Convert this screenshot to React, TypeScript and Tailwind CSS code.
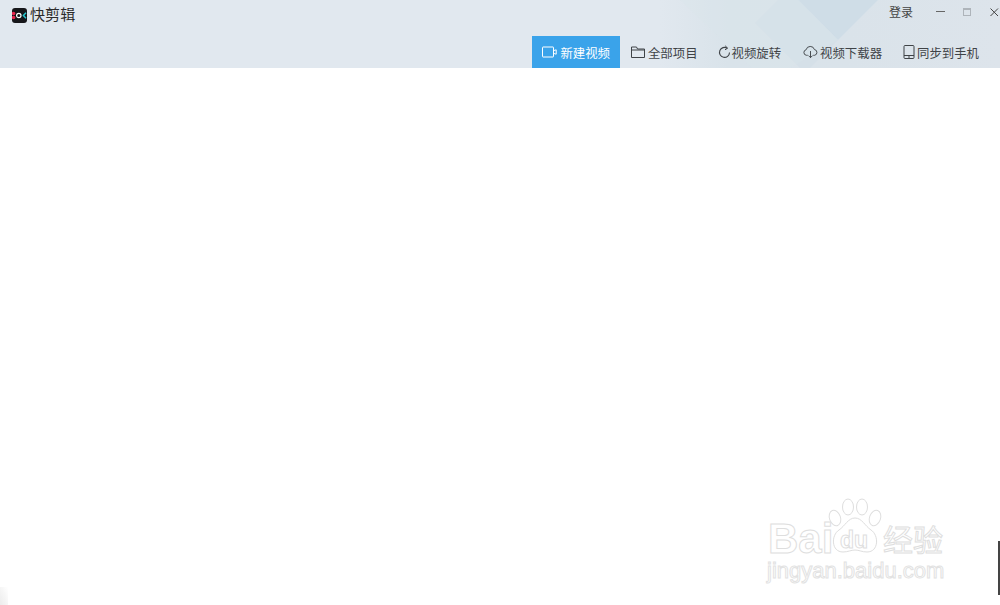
import React from "react";

const cjk = "font-['Noto_Sans_CJK_SC','Liberation_Sans',sans-serif]";

function VideoIcon() {
  return (
    <svg width="15" height="12" viewBox="0 0 15 12" fill="none" stroke="currentColor" strokeWidth="1">
      <rect x="0.5" y="1" width="11" height="10" rx="0.5" />
      <path d="M12 4.5 14.2 3.8V8.2L12 7.5" />
    </svg>
  );
}
function FolderIcon() {
  return (
    <svg className="ml-[1px]" width="14" height="12" viewBox="0 0 14 12" fill="none" stroke="currentColor" strokeWidth="1">
      <path d="M0.5 11.5V1H5.5L6.5 3H13.5V11.5Z" />
      <path d="M0.5 4H13.5" />
    </svg>
  );
}
function RotateIcon() {
  return (
    <svg width="13" height="14" viewBox="0 0 13 14" fill="none" stroke="currentColor" strokeWidth="1.1">
      <path d="M9.2 3.2A5 5 0 1 0 11.5 7.5" />
      <path d="M7.2 0.8 9.6 3.2 7 4.8" strokeWidth="1" />
    </svg>
  );
}
function CloudIcon() {
  return (
    <svg className="ml-[2px]" width="15" height="14" viewBox="0 0 16 14" fill="none" stroke="currentColor" strokeWidth="1">
      <path d="M5 10.5H3.6A3 3 0 0 1 3.3 4.6 4.6 4.6 0 0 1 12.2 4.4 3.1 3.1 0 0 1 12.4 10.5H11" />
      <path d="M8 6V13M5.8 10.8 8 13 10.2 10.8" />
    </svg>
  );
}
function PhoneIcon() {
  return (
    <svg className="ml-[1px]" width="12" height="14" viewBox="0 0 12 14" fill="none" stroke="currentColor" strokeWidth="1">
      <rect x="1" y="0.5" width="10" height="13" rx="1" />
      <path d="M1 10.5H11M5 12H7" />
    </svg>
  );
}

type NavItem = { label: string; icon: React.ReactNode; slot: string; active?: boolean };

const nav: NavItem[] = [
  { label: "新建视频", icon: <VideoIcon />, slot: "w-[18px]", active: true },
  { label: "全部项目", icon: <FolderIcon />, slot: "w-[18px]" },
  { label: "视频旋转", icon: <RotateIcon />, slot: "w-[14px]" },
  { label: "视频下载器", icon: <CloudIcon />, slot: "w-[19px]" },
  { label: "同步到手机", icon: <PhoneIcon />, slot: "w-[15px]" },
];

function Logo() {
  return (
    <svg width="15" height="15" viewBox="0 0 15 15">
      <rect width="15" height="15" rx="3" fill="#17171b" />
      <circle cx="1.6" cy="5.5" r="1.8" fill="#e8264f" />
      <circle cx="1.6" cy="9.5" r="1.8" fill="#e8264f" />
      <circle cx="6.8" cy="7.5" r="2.2" fill="none" stroke="#fff" strokeWidth="1.2" />
      <path d="M14 4.8 11.4 7.5 14 10.2" fill="none" stroke="#25c6d0" strokeWidth="1.5" />
    </svg>
  );
}

export default function App() {
  return (
    <div className={`relative h-[605px] w-[1000px] overflow-hidden bg-white ${cjk}`}>
      <header className="relative h-[68px] overflow-hidden bg-[#e1e8ef]">
        <svg className="absolute left-[660px] top-0" width="340" height="68" viewBox="0 0 340 68">
          <defs>
            <linearGradient id="wash" x1="0" x2="1" y1="0" y2="0">
              <stop offset="0" stopColor="#e1e8ef" />
              <stop offset="0.2" stopColor="#d9e3ea" />
              <stop offset="0.55" stopColor="#dae3ea" />
              <stop offset="1" stopColor="#dde4eb" />
            </linearGradient>
          </defs>
          <rect width="340" height="68" fill="url(#wash)" />
          <path d="M95 23 118 0H139L178 40 150 68H140Z" fill="#d5e0e8" />
          <path d="M138 0H218L178 40Z" fill="#cfdde7" />
          <path d="M20 0 92 68H130L178 40 139 0Z" fill="#dbe5eb" opacity="0.35" />
        </svg>

        <div className="relative flex h-[36px] items-start justify-between">
          <div className="flex items-center gap-[3px] pl-[12px] pt-[7px]">
            <Logo />
            <span className="text-[15px] leading-[16px] tracking-[0.1px] text-[#2b2b2b] -translate-y-[1px]">快剪辑</span>
          </div>
          <div className="flex items-center pt-[3px] text-[#555]">
            <span className="mr-[23px] text-[12px] leading-[17px] text-[#444]">登录</span>
            <span className="mr-[18px] h-[1px] w-[9px] bg-[#666]" />
            <span className="mr-[18px] h-[8px] w-[8px] border border-[#aeb4ba] border-t-2" />
            <svg className="mr-[1px]" width="10" height="10" viewBox="0 0 10 10" stroke="#444" strokeWidth="1">
              <path d="M1.5 1.5 9 9M9 1.5 1.5 9" />
            </svg>
          </div>
        </div>

        <nav className="relative flex h-[32px] justify-end pr-[11px]">
          {nav.map((item) => (
            <div
              key={item.label}
              className={`flex h-full items-center px-[10px] text-[12.4px] ${
                item.active ? "bg-[#3aa3ea] text-white" : "text-[#3f4347]"
              }`}
            >
              <span className={`flex items-center ${item.slot}`}>{item.icon}</span>
              <span className="translate-y-[1px]">{item.label}</span>
            </div>
          ))}
        </nav>
      </header>

      <div className="absolute left-[767px] top-[498px] h-[90px] w-[185px] select-none font-['Liberation_Sans',sans-serif] text-transparent">
        <span className="absolute left-[1px] top-[19px] text-[42px] leading-[44px] font-bold [-webkit-text-stroke:1px_#dedede]">Bai</span>
        <svg className="absolute left-[61px] top-0" width="54" height="56" viewBox="0 0 54 56" fill="none" stroke="#dedede" strokeWidth="1">
          <ellipse cx="7" cy="20" rx="5.5" ry="8" transform="rotate(-20 7 20)" />
          <ellipse cx="20" cy="9" rx="5.5" ry="8" />
          <ellipse cx="34" cy="9" rx="5.5" ry="8" />
          <ellipse cx="47" cy="20" rx="5.5" ry="8" transform="rotate(20 47 20)" />
          <path d="M27 20C20 20 17 28 11 32 3 37 3 54 15 54 20 54 23 52 27 52 31 52 34 54 39 54 51 54 51 37 43 32 37 28 34 20 27 20Z" />
        </svg>
        <span className="absolute left-[73px] top-[30px] text-[23px] leading-[24px] font-bold [-webkit-text-stroke:1px_#dedede]">du</span>
        <span className={`absolute left-[116px] top-[22px] whitespace-nowrap text-[30px] leading-[36px] [-webkit-text-stroke:1px_#dedede] ${cjk}`}>经验</span>
        <span className="absolute left-0 top-[60px] whitespace-nowrap text-[22px] leading-[26px] [-webkit-text-stroke:1px_#e2e2e2]">jingyan.baidu.com</span>
      </div>

      <div className="absolute left-[998px] top-[541px] h-[54px] w-[2px] bg-[#444]" />
      <div className="absolute bottom-0 left-0 h-[18px] w-[8px] bg-gradient-to-tr from-[#ececec] to-white" />
    </div>
  );
}
